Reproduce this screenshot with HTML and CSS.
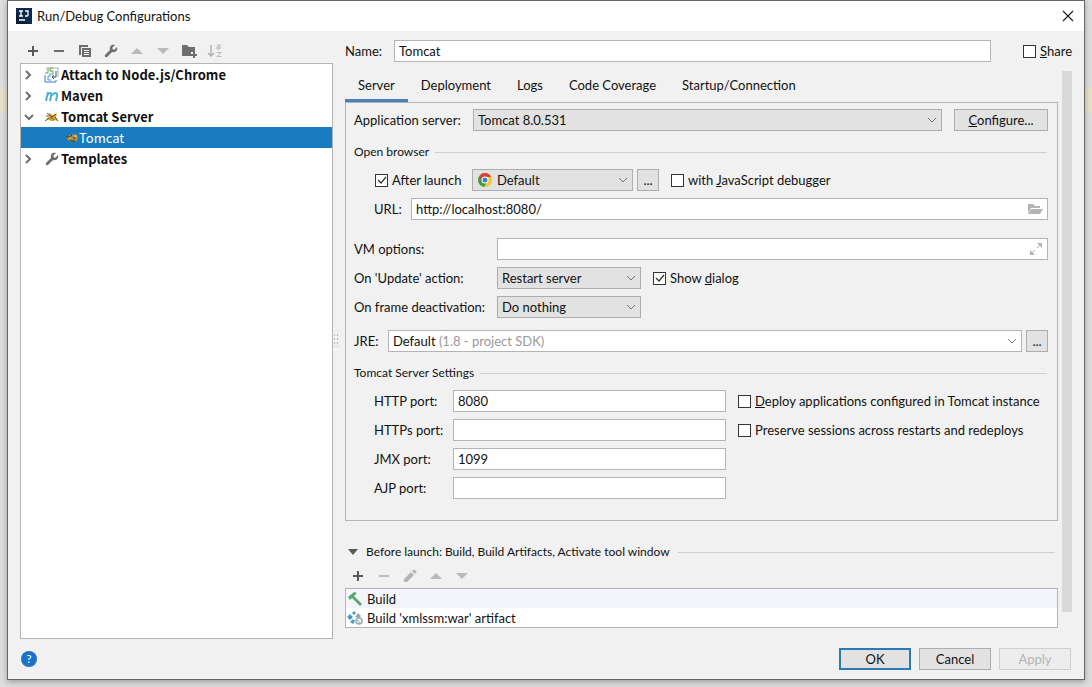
FILE: index.html
```html
<!DOCTYPE html>
<html lang="en">
  <head>
    <meta charset="UTF-8" />
    <meta name="viewport" content="width=device-width, initial-scale=1.0" />
    <title>Run/Debug Configurations</title>
    <link rel="stylesheet" href="styles.css">
  </head>
  <body>
    <div class="window">
      <header class="titlebar">
        <svg class="app-icon" width="16" height="16" viewBox="0 0 16 16">
          <rect width="16" height="16" fill="#0b1b33" />
          <path d="M0 0h16v16h-3L4 12 0 5z" fill="#10284a" />
          <path d="M3 3h4M5 3v5M3 8h4M9 3h3v4q0 1-1 1H9M3 12h6" fill="none" stroke="#fff" stroke-width="1.3" />
        </svg>
        <h1>Run/Debug Configurations</h1>
        <button class="close" aria-label="Close">
          <svg width="12" height="12" viewBox="0 0 12 12"><path d="M1 1l10 10M11 1L1 11" stroke="#222" stroke-width="1.2" /></svg>
        </button>
      </header>

      <main class="content">
        <section class="sidebar">
          <div class="toolbar">
            <button aria-label="Add"><svg viewBox="0 0 16 16"><path d="M8 3v10M3 8h10" stroke="#595959" stroke-width="2" /></svg></button>
            <button aria-label="Remove"><svg viewBox="0 0 16 16"><path d="M3 8h10" stroke="#6e6e6e" stroke-width="2" /></svg></button>
            <button aria-label="Copy">
              <svg viewBox="0 0 16 16">
                <path d="M2 12V2h9v2H4v8z" fill="#6e6e6e" />
                <path fill-rule="evenodd" d="M5 5h9v9H5zM7 7h5v1H7zM7 9h5v1H7zM7 11h5v1H7z" fill="#6e6e6e" />
              </svg>
            </button>
            <button aria-label="Edit templates">
              <svg viewBox="0 0 16 16"><path d="M14 4l-3 3-2-2 3-3C9 1 6 3 7 7L2 12c-1 1 1 3 2 2l5-5c4 1 6-2 5-5z" fill="#6e6e6e" /></svg>
            </button>
            <button aria-label="Move up" disabled><svg viewBox="0 0 16 16"><path d="M2 11l6-6 6 6z" fill="#bababa" /></svg></button>
            <button aria-label="Move down" disabled><svg viewBox="0 0 16 16"><path d="M2 5h12l-6 6z" fill="#bababa" /></svg></button>
            <button aria-label="Create folder">
              <svg viewBox="0 0 16 16">
                <path d="M1 2h5l2 2h6v5h-4v4H1z" fill="#6e6e6e" />
                <path d="M13 9v6M10 12h6" stroke="#6e6e6e" stroke-width="2" />
              </svg>
            </button>
            <button aria-label="Sort" disabled>
              <svg viewBox="0 0 16 16" fill="none" stroke="#b5b5b5">
                <path d="M4 2v11M1 10l3 3 3-3" stroke-width="1.5" />
                <path d="M10 2h3v4h-3V4h3M10 9.500h4l-4 4h4.500" />
              </svg>
            </button>
          </div>

          <ul class="tree">
            <li>
              <svg class="arrow" viewBox="0 0 8 10"><path d="M2 1l4 4-4 4" /></svg>
              <svg class="icon" viewBox="0 0 16 16" fill="none">
                <path d="M4 1v5H1M9 1H6v3h3v3H5" stroke="#5fa04e" />
                <path d="M2 1h12M14 1v9" stroke="#9db892" />
                <path d="M1 8v7h11v-2" stroke="#3c78c8" />
                <path d="M7 9H4v4h3" stroke="#4a90c8" />
                <path d="M12 4v6H8M10 8l-2 2 2 2" stroke="#33508a" />
              </svg>
              Attach to Node.js/Chrome
            </li>
            <li>
              <svg class="arrow" viewBox="0 0 8 10"><path d="M2 1l4 4-4 4" /></svg>
              <svg class="icon" viewBox="0 0 16 16" fill="none" stroke="#4db3d6" stroke-width="2">
                <path d="M2 13L4 4M3 8c2-4 5-4 4 0l-1 5M7 8c3-4 7-4 6 0l-1 5" />
              </svg>
              Maven
            </li>
            <li>
              <svg class="arrow open" viewBox="0 0 10 8"><path d="M1 2l4 4 4-4" /></svg>
              <svg class="icon" viewBox="0 0 16 16">
                <path d="M2 10l3-2 0-4 4 2 4-2-1 4 2 4-4-1-3 1-2-1z" fill="#d9a833" />
                <path d="M1 12l4-3M3 4l5 4 4-3M6 9h3M11 8l3 4M2 7h3M9 12l1-2" stroke="#6b5426" fill="none" />
              </svg>
              Tomcat Server
            </li>
            <li class="child selected">
              <svg class="icon small" viewBox="0 0 14 14">
                <path d="M1 7l4-3 5-1 3 3-1 4-5 1-4-2z" fill="#a98f45" />
                <path d="M1 6h4l2-2M5 9l2 1h3M8 6l2 2" stroke="#33331f" fill="none" />
                <path d="M9 5h3M4 7h2" stroke="#f2d878" />
              </svg>
              Tomcat
            </li>
            <li>
              <svg class="arrow" viewBox="0 0 8 10"><path d="M2 1l4 4-4 4" /></svg>
              <svg class="icon" viewBox="0 0 16 16"><path d="M14 4l-3 3-2-2 3-3C9 1 6 3 7 7L2 12c-1 1 1 3 2 2l5-5c4 1 6-2 5-5z" fill="#6e6e6e" /></svg>
              Templates
            </li>
          </ul>
        </section>

        <div class="splitter"></div>

        <section class="editor">
          <div class="name-row">
            <label for="name">Name:</label>
            <input type="text" id="name" value="Tomcat">
            <label class="check"><input type="checkbox"><span><u>S</u>hare</span></label>
          </div>

          <div class="scroll">
            <div class="form">
              <nav class="tabs">
                <button class="active">Server</button>
                <button>Deployment</button>
                <button>Logs</button>
                <button>Code Coverage</button>
                <button>Startup/Connection</button>
              </nav>

              <div class="panel">
                <div class="row server-row">
                  <label for="server">Application server:</label>
                  <select id="server"><option>Tomcat 8.0.531</option></select>
                  <button class="btn configure"><span><u>C</u>onfigure...</span></button>
                </div>

                <h2>Open browser</h2>
                <div class="row indent launch-row">
                  <label class="check after-launch"><input type="checkbox" checked>After launch</label>
                  <div class="browser">
                    <svg width="14" height="14" viewBox="0 0 14 14">
                      <circle cx="7" cy="7" r="7" fill="#f7c52d" />
                      <path d="M7 7L1 3.500a7 7 0 0 0 5 10.400L9 9z" fill="#3c9c50" />
                      <path d="M1 3.500a7 7 0 0 1 12.300.500H7L4 8z" fill="#d5443a" />
                      <circle cx="7" cy="7" r="3.500" fill="#fff" />
                      <circle cx="7" cy="7" r="2.500" fill="#3f7fd0" />
                    </svg>
                    <select aria-label="Browser"><option>Default</option></select>
                  </div>
                  <button class="btn more" aria-label="Browsers">...</button>
                  <label class="check js-debug"><input type="checkbox"><span>with <u>J</u>avaScript debugger</span></label>
                </div>
                <div class="row indent url-row">
                  <label for="url">URL:</label>
                  <div class="field">
                    <input type="text" id="url" value="http://localhost:8080/">
                    <svg width="16" height="16" viewBox="0 0 16 16"><path d="M1 3h5l2 2h5v2H4l-3 5z" fill="#b4b4b4" /><path d="M4 8h12l-3 5H1z" fill="#b4b4b4" /></svg>
                  </div>
                </div>

                <div class="options">
                  <label for="vm">VM options:</label>
                  <div class="field">
                    <input type="text" id="vm">
                    <svg width="14" height="14" viewBox="0 0 14 14"><path d="M8 1h5v5zM1 8v5h5z" fill="#b4b4b4" /><path d="M8 6l3-3M6 8l-3 3" stroke="#b4b4b4" /></svg>
                  </div>
                  <label for="update">On 'Update' action:</label>
                  <div class="row">
                    <select id="update" class="short"><option>Restart server</option></select>
                    <label class="check"><input type="checkbox" checked><span>Show <u>d</u>ialog</span></label>
                  </div>
                  <label for="frame">On frame deactivation:</label>
                  <select id="frame" class="short"><option>Do nothing</option></select>
                </div>

                <div class="row jre-row">
                  <label for="jre">JRE:</label>
                  <button class="combo" id="jre">
                    <span>Default <span class="hint">(1.8 - project SDK)</span></span>
                    <svg width="10" height="6" viewBox="0 0 10 6"><path d="M1 1l4 4 4-4" fill="none" stroke="#777" /></svg>
                  </button>
                  <button class="btn more" aria-label="Browse JRE">...</button>
                </div>

                <h2>Tomcat Server Settings</h2>
                <div class="ports">
                  <label for="http">HTTP port:</label>
                  <input type="text" id="http" value="8080">
                  <label class="check"><input type="checkbox"><span><u>D</u>eploy applications configured in Tomcat instance</span></label>
                  <label for="https">HTTPs port:</label>
                  <input type="text" id="https">
                  <label class="check"><input type="checkbox">Preserve sessions across restarts and redeploys</label>
                  <label for="jmx">JMX port:</label>
                  <input type="text" id="jmx" value="1099">
                  <span></span>
                  <label for="ajp">AJP port:</label>
                  <input type="text" id="ajp">
                </div>
              </div>

              <h2 class="before">
                <svg width="10" height="6" viewBox="0 0 10 6"><path d="M0 0h10L5 6z" fill="#595959" /></svg>
                Before launch: Build, Build Artifacts, Activate tool window
              </h2>
              <div class="toolbar tasks-toolbar">
                <button aria-label="Add task"><svg viewBox="0 0 16 16"><path d="M8 3v10M3 8h10" stroke="#595959" stroke-width="2" /></svg></button>
                <button aria-label="Remove task" disabled><svg viewBox="0 0 16 16"><path d="M3 8h10" stroke="#bababa" stroke-width="2" /></svg></button>
                <button aria-label="Edit task" disabled><svg viewBox="0 0 16 16"><path d="M2 14v-3l7-7 3 3-7 7zM10 3l1-1q1-1 2 0l1 1q1 1 0 2l-1 1z" fill="#b5b5b5" /></svg></button>
                <button aria-label="Move task up" disabled><svg viewBox="0 0 16 16"><path d="M2 11l6-6 6 6z" fill="#bababa" /></svg></button>
                <button aria-label="Move task down" disabled><svg viewBox="0 0 16 16"><path d="M2 5h12l-6 6z" fill="#bababa" /></svg></button>
              </div>
              <ul class="tasks">
                <li>
                  <svg viewBox="0 0 16 16"><path d="M1 6l6-5 3 1-3 3 8 8-2 2-8-8-2 2z" fill="#59a869" /></svg>
                  Build
                </li>
                <li>
                  <svg viewBox="0 0 16 16">
                    <path d="M7 1l2 2-2 2-2-2zM3 4l3 3-3 3-3-3zM6 9l2 2-2 3-3-2z" fill="#4a9bc4" />
                    <path d="M11 3l3 3-2 2-4-1z" fill="#9aa7b0" />
                    <circle cx="12" cy="11" r="3" fill="#fff" stroke="#9aa7b0" stroke-width="1.500" />
                    <path d="M10 10l2 1v3" fill="none" stroke="#9aa7b0" />
                  </svg>
                  Build 'xmlssm:war' artifact
                </li>
              </ul>
            </div>
            <div class="scrollbar"></div>
          </div>
        </section>
      </main>

      <footer class="footer">
        <button class="help" aria-label="Help">?</button>
        <button class="btn ok">OK</button>
        <button class="btn">Cancel</button>
        <button class="btn" disabled>Apply</button>
      </footer>
    </div>
  </body>
</html>
```
FILE: styles.css
```css
* {
  box-sizing: border-box;
}

body {
  margin: 0;
  padding: 0 7px 7px;
  min-height: 100vh;
  display: flex;
  background: #dedede linear-gradient(#e8e2cc, #e8e2cc) 0 87px / 100% 26px no-repeat;
  font-family: Lato, "Open Sans", sans-serif;
  font-size: 13px;
  line-height: 18px;
  color: #111;
}

button,
input,
select {
  font: inherit;
  color: inherit;
  border-radius: 0;
  margin: 0;
}

button {
  padding: 0;
  border: none;
  background: none;
}

svg {
  flex: none;
}

.window {
  flex: 1;
  min-width: 0;
  display: flex;
  flex-direction: column;
  background-color: #f1f1f1;
  border: 1px solid #666;
  box-shadow: 0 2px 6px rgba(0, 0, 0, 0.3);
}

.titlebar {
  display: flex;
  align-items: center;
  height: 30px;
  padding: 0 8px;
  background-color: #fff;
}

.titlebar h1 {
  flex: 1;
  margin: 0 0 0 5px;
  font-size: 13px;
  font-weight: normal;
}

.close {
  display: flex;
  padding: 2px;
}

.content {
  flex: 1;
  display: flex;
  padding: 9px 12px 0;
}

/* left side */
.sidebar {
  flex: none;
  width: 313px;
  display: flex;
  flex-direction: column;
}

.toolbar {
  display: flex;
  gap: 10px;
  padding: 3px 5px 4px;
}

.toolbar button {
  width: 16px;
  height: 16px;
}

.toolbar svg {
  display: block;
  width: 16px;
  height: 16px;
}

.tree {
  flex: 1;
  margin: 0;
  padding: 0;
  list-style: none;
  background-color: #fff;
  border: 1px solid #b4b4b4;
  font-family: "Noto Sans CJK SC", "Open Sans", sans-serif;
  font-weight: bold;
}

.tree li {
  display: flex;
  align-items: center;
  height: 21px;
  padding-left: 3px;
}

.tree .arrow {
  width: 8px;
  height: 10px;
  margin-right: 12px;
  fill: none;
  stroke: #6e6e6e;
  stroke-width: 2;
}

.tree .arrow.open {
  width: 10px;
  height: 8px;
  margin-right: 10px;
}

.tree .icon {
  width: 16px;
  height: 16px;
  margin-right: 1px;
}

.tree .child {
  padding-left: 44px;
  font-weight: normal;
}

.tree .small {
  width: 14px;
  height: 14px;
  margin-right: 0;
}

.tree .selected {
  background-color: #197bc0;
  color: #fff;
}

.splitter {
  flex: none;
  width: 5px;
  height: 14px;
  margin: 0 7px 0 0;
  align-self: center;
  background: radial-gradient(#bbb 1px, transparent 1px) 0 0 / 3px 4px;
}

/* right side */
.editor {
  flex: 1;
  min-width: 0;
  display: flex;
  flex-direction: column;
}

.name-row {
  display: flex;
  align-items: center;
}

.name-row > label:first-child {
  width: 39px;
}

.name-row > input {
  flex: 1;
  margin: 0 32px 0 10px;
}

input[type="text"] {
  height: 22px;
  min-width: 0;
  padding: 0 4px;
  border: 1px solid #b4b4b4;
  background-color: #fff;
}

input[type="checkbox"] {
  appearance: none;
  flex: none;
  width: 13px;
  height: 13px;
  border: 1px solid #333;
  background: #fff;
}

input[type="checkbox"]:checked {
  background: #fff url("data:image/svg+xml,%3Csvg xmlns='http://www.w3.org/2000/svg' viewBox='0 0 11 11'%3E%3Cpath d='M2 5l3 3 5-6' fill='none' stroke='%23333' stroke-width='1.2'/%3E%3C/svg%3E");
}

.check {
  display: flex;
  align-items: center;
  gap: 4px;
  white-space: nowrap;
}

select {
  appearance: none;
  height: 22px;
  padding: 0 20px 0 4px;
  border: 1px solid #adadad;
  background: #e2e2e2 url("data:image/svg+xml,%3Csvg xmlns='http://www.w3.org/2000/svg' viewBox='0 0 10 6'%3E%3Cpath d='M1 1l4 4 4-4' fill='none' stroke='%23777'/%3E%3C/svg%3E") no-repeat right 4px center / 10px 6px;
}

.btn {
  width: 72px;
  height: 22px;
  line-height: 20px;
  background-color: #e2e2e2;
  border: 1px solid #adadad;
}

.scroll {
  display: flex;
  gap: 4px;
  margin-top: 9px;
}

.form {
  flex: 1;
  min-width: 0;
}

.scrollbar {
  flex: none;
  width: 10px;
  height: 541px;
  background-color: #d9d9d9;
}

.tabs {
  display: flex;
  height: 31px;
}

.tabs button {
  padding: 0 13px;
  border-bottom: 3px solid transparent;
}

.tabs .active {
  border-color: #4a80b4;
}

.panel {
  height: 419px;
  padding: 6px 9px 0 8px;
  border: 1px solid #b4b4b4;
}

.row {
  display: flex;
  align-items: center;
  white-space: nowrap;
}

.indent {
  padding-left: 20px;
}

.server-row label {
  width: 109px;
}

.server-row select {
  flex: 1;
  margin: 0 12px 0 10px;
}

.configure {
  width: 94px;
}

h2 {
  display: flex;
  align-items: center;
  gap: 6px;
  margin: 0;
  font-size: 12px;
  font-weight: normal;
}

h2::after {
  content: "";
  flex: 1;
  height: 1px;
  background-color: #cfcfcf;
}

.panel h2 {
  margin: 12px 1px 8px 0;
}

.after-launch {
  width: 88px;
  padding-left: 1px;
}

.browser {
  position: relative;
  margin: 0 4px 0 10px;
}

.browser svg {
  position: absolute;
  left: 6px;
  top: 4px;
}

.browser select {
  display: block;
  width: 161px;
  padding-left: 24px;
}

.more {
  width: 22px;
}

.js-debug {
  margin-left: 12px;
}

.url-row {
  margin: 7px 0 18px;
}

.url-row label {
  width: 37px;
}

.field {
  flex: 1;
  display: flex;
  align-items: center;
  height: 22px;
  padding-right: 4px;
  border: 1px solid #b4b4b4;
  background-color: #fff;
}

.field input[type="text"] {
  flex: 1;
  height: 20px;
  border: none;
}

.options {
  display: grid;
  grid-template-columns: 143px 1fr;
  align-items: center;
  row-gap: 7px;
}

.short {
  width: 144px;
  margin-right: 12px;
}

.jre-row {
  margin-top: 12px;
}

.jre-row label {
  width: 34px;
}

.combo {
  flex: 1;
  display: flex;
  align-items: center;
  justify-content: space-between;
  height: 22px;
  margin-right: 4px;
  padding: 0 4px;
  border: 1px solid #b4b4b4;
  background-color: #fff;
}

.hint {
  color: #999;
}

.ports {
  display: grid;
  grid-template-columns: 79px 273px 1fr;
  gap: 7px 0;
  align-items: center;
  padding-left: 20px;
}

.ports .check {
  margin-left: 12px;
}

.before {
  margin: 22px 3px 0;
  gap: 8px;
}

.tasks-toolbar {
  padding: 7px 5px 4px;
}

.tasks {
  margin: 0;
  padding: 0;
  list-style: none;
  background-color: #fff;
  border: 1px solid #b4b4b4;
}

.tasks li {
  display: flex;
  align-items: center;
  gap: 4px;
  height: 19px;
  padding-left: 1px;
}

.tasks li:first-child {
  background-color: #f2f6fa;
}

.tasks svg {
  width: 16px;
  height: 16px;
}

.footer {
  display: flex;
  align-items: center;
  gap: 8px;
  padding: 9px 13px;
}

.help {
  width: 16px;
  height: 16px;
  margin-right: auto;
  border-radius: 50%;
  background-color: #1a73c4;
  color: #fff;
  font-size: 12px;
  line-height: 16px;
}

.ok {
  border: 2px solid #2a7ab5;
  line-height: 18px;
}

.btn:disabled {
  color: #b4b4b4;
  background-color: #ededed;
  border-color: #cfcfcf;
}
```
